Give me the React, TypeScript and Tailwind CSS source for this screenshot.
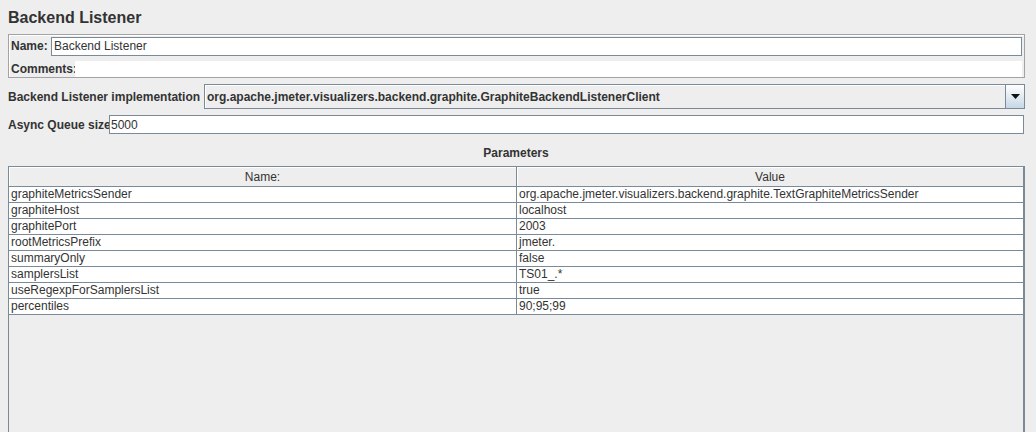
const PARAMS: [string, string][] = [
  ['graphiteMetricsSender', 'org.apache.jmeter.visualizers.backend.graphite.TextGraphiteMetricsSender'],
  ['graphiteHost', 'localhost'],
  ['graphitePort', '2003'],
  ['rootMetricsPrefix', 'jmeter.'],
  ['summaryOnly', 'false'],
  ['samplersList', 'TS01_.*'],
  ['useRegexpForSamplersList', 'true'],
  ['percentiles', '90;95;99'],
];

export default function App() {
  return (
    <div className="w-[1036px] h-[432px] overflow-hidden bg-[#eeeeee] text-[#333333] font-['Liberation_Sans',Arial,sans-serif] flex flex-col whitespace-nowrap">
      <div className="mt-[8px] ml-[8px] text-[16px] leading-[20px] font-bold">Backend Listener</div>

      {/* name / comments panel */}
      <div className="mt-[6px] ml-[8px] w-[1017px] h-[44px] border border-[#a3a3a3] shadow-[inset_1px_1px_0_#ffffff] flex flex-col">
        <div className="flex items-center h-[20px] mt-[1px]">
          <span className="shrink-0 ml-[2px] w-[40px] text-[12px] font-bold">Name:</span>
          <div className="shrink-0 w-[971px] h-[19px] bg-white border border-[#7a8a99] flex items-center pl-[2px] text-[12px]">
            Backend Listener
          </div>
        </div>
        <div className="flex items-end h-[21px]">
          <span className="shrink-0 ml-[2px] w-[64px] text-[12px] font-bold leading-[16px]">Comments:</span>
          <div className="shrink-0 w-[947px] h-[16px] bg-white" />
        </div>
      </div>

      {/* implementation combo */}
      <div className="mt-[6px] ml-[8px] flex items-center h-[25px]">
        <span className="shrink-0 w-[196px] text-[12px] font-bold">Backend Listener implementation</span>
        <div className="shrink-0 w-[821px] h-[25px] border border-[#7a8a99] bg-[#eeeeee] flex">
          <div className="flex-1 flex items-center pl-[2px] text-[12px] font-bold shadow-[inset_1px_1px_0_#ffffff]">
            org.apache.jmeter.visualizers.backend.graphite.GraphiteBackendListenerClient
          </div>
          <div className="w-[19px] border-l border-[#7a8a99] bg-gradient-to-b from-[#ffffff] to-[#c6d7e6] flex items-center justify-center">
            <svg width="9" height="5" viewBox="0 0 9 5">
              <path d="M0 0h9L4.5 5z" fill="#111111" />
            </svg>
          </div>
        </div>
      </div>

      {/* async queue */}
      <div className="mt-[6px] ml-[8px] flex items-center h-[19px]">
        <span className="shrink-0 w-[101px] text-[12px] font-bold">Async Queue size</span>
        <div className="shrink-0 w-[915px] h-[19px] bg-white border border-[#7a8a99] flex items-center pl-[1px] text-[12px]">
          5000
        </div>
      </div>

      <div className="mt-[12px] ml-[8px] w-[1016px] text-center text-[12px] font-bold leading-[15px]">Parameters</div>

      {/* parameters table */}
      <div className="mt-[5px] ml-[8px] w-[1017px] flex-1 border-l border-t border-r-2 border-[#7a8a99] flex flex-col">
        <div className="flex h-[20px] border-b border-[#7a8a99] text-[12px]">
          <div className="w-[508px] flex items-center justify-center border-r border-[#7a8a99] shadow-[inset_1px_1px_0_#ffffff]">Name:</div>
          <div className="flex-1 flex items-center justify-center shadow-[inset_1px_1px_0_#ffffff]">Value</div>
        </div>
        {PARAMS.map(([k, v]) => (
          <div key={k} className="flex h-[16px] border-b border-[#7a8a99] bg-white text-[12px] leading-[15px]">
            <div className="w-[508px] pl-[2px] border-r border-[#7a8a99]">{k}</div>
            <div className="flex-1 pl-[2px]">{v}</div>
          </div>
        ))}
      </div>
    </div>
  );
}
